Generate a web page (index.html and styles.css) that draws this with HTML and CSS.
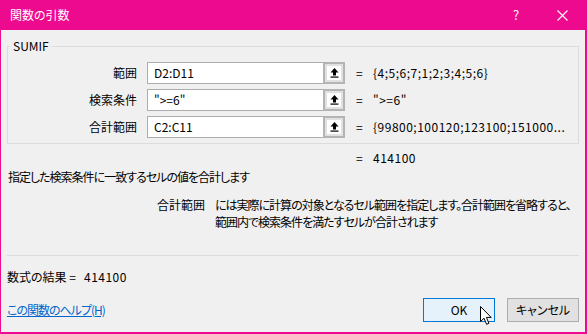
FILE: index.html
```html
<!DOCTYPE html>
<html lang="ja">
<head>
  <meta charset="utf-8">
  <title>関数の引数</title>
  <link rel="stylesheet" href="styles.css">
</head>
<body>
  <div class="window">
    <div class="titlebar">
      <span class="title">関数の引数</span>
      <span class="ctrl">?</span>
      <span class="ctrl">
        <svg width="11" height="11" viewBox="0 0 11 11"><path d="M0.5 0.5 L10.5 10.5 M10.5 0.5 L0.5 10.5" stroke="#fff" stroke-width="1.1" fill="none"/></svg>
      </span>
    </div>

    <div class="content">
      <fieldset class="group">
        <legend>SUMIF</legend>
        <div class="args">
          <label class="name">範囲</label>
          <div class="field">D2:D11</div>
          <div class="pick"><span class="pick-in"><svg width="9" height="10" viewBox="0 0 9 10"><path d="M4.5 0 L8.5 4.5 L6 4.5 L6 7.5 L3 7.5 L3 4.5 L0.5 4.5 Z" fill="#000"/><rect x="0.5" y="8.5" width="8" height="1.2" fill="#000"/></svg></span></div>
          <span class="eq">=</span>
          <span class="val">{4;5;6;7;1;2;3;4;5;6}</span>

          <label class="name">検索条件</label>
          <div class="field">"&gt;=6"</div>
          <div class="pick"><span class="pick-in"><svg width="9" height="10" viewBox="0 0 9 10"><path d="M4.5 0 L8.5 4.5 L6 4.5 L6 7.5 L3 7.5 L3 4.5 L0.5 4.5 Z" fill="#000"/><rect x="0.5" y="8.5" width="8" height="1.2" fill="#000"/></svg></span></div>
          <span class="eq">=</span>
          <span class="val">"&gt;=6"</span>

          <label class="name">合計範囲</label>
          <div class="field">C2:C11</div>
          <div class="pick"><span class="pick-in"><svg width="9" height="10" viewBox="0 0 9 10"><path d="M4.5 0 L8.5 4.5 L6 4.5 L6 7.5 L3 7.5 L3 4.5 L0.5 4.5 Z" fill="#000"/><rect x="0.5" y="8.5" width="8" height="1.2" fill="#000"/></svg></span></div>
          <span class="eq">=</span>
          <span class="val">{99800;100120;123100;151000...</span>
        </div>
      </fieldset>

      <div class="total">
        <span class="eq">=</span>
        <span class="val">414100</span>
      </div>

      <p class="summary">指定した検索条件に一致するセルの値を合計します</p>

      <div class="argdesc">
        <span class="argname">合計範囲</span>
        <span class="argtext">には実際に計算の対象となるセル範囲を指定します。合計範囲を省略すると、<br>範囲内で検索条件を満たすセルが合計されます</span>
      </div>

      <hr class="sep">

      <div class="formula">数式の結果 =&nbsp;&nbsp;&nbsp;<span class="val">414100</span></div>

      <div class="footer">
        <a href="#" class="help">この関数のヘルプ(H)</a>
        <button class="btn primary">OK</button>
        <button class="btn">キャンセル</button>
      </div>
    </div>

    <svg class="cursor" width="13" height="20" viewBox="0 0 13 20"><path d="M0.5 0.5 L0.5 15.5 L4 12.2 L6.6 18.3 L8.9 17.3 L6.4 11.4 L11.2 11.4 Z" fill="#fff" stroke="#000" stroke-width="1" stroke-linejoin="miter"/></svg>
  </div>
</body>
</html>
```

FILE: styles.css
```css
/* base */
* { box-sizing: border-box; }
body {
  margin: 0;
  background: #f0f0f0;
  font-family: "Noto Sans CJK JP", "Noto Sans", sans-serif;
  font-size: 12px;
  line-height: 16px;
  color: #000;
  font-feature-settings: "palt"; }

/* window frame */
.window {
  position: relative;
  width: 587px;
  height: 334px;
  background: #f0f0f0;
  border: solid #ee0a8f;
  border-width: 0 2px 2px 1px; }
.titlebar {
  height: 30px;
  background: #ee0a8f;
  color: #fff;
  display: flex;
  align-items: center; }
.title {
  flex: 1;
  padding-left: 9px; }
.ctrl {
  width: 46px;
  height: 30px;
  display: flex;
  align-items: center;
  justify-content: center;
  font-size: 13px; }

/* dialog body */
.content {
  padding: 0 6px; }
.group {
  margin: 8px 0 0;
  padding: 0 0 5px;
  border: 1px solid #dcdcdc; }
.group legend {
  margin-left: 2px;
  padding: 0 3px; }
.args {
  display: grid;
  grid-template-columns: 139px 176px 22px 28px 1fr;
  grid-auto-rows: 22px;
  row-gap: 5px;
  margin-top: 8px;
  align-items: center; }
.name {
  text-align: right;
  padding-right: 10px; }
.field {
  height: 22px;
  border: 1px solid #adadad;
  border-right: none;
  background: #fff;
  padding: 2px 6px; }
.pick {
  height: 22px;
  border: 2px solid #b4b4b4;
  background: #e1e1e1;
  display: flex;
  align-items: center;
  justify-content: center; }
.pick-in {
  width: 14px;
  height: 14px;
  background: #fff;
  display: flex;
  align-items: center;
  justify-content: center; }
.eq {
  padding-left: 11px; }
.val {
  white-space: nowrap;
  letter-spacing: 0.5px; }

.total {
  display: grid;
  grid-template-columns: 338px 28px 1fr;
  margin-top: 6px; }
.total .eq {
  grid-column: 2; }

/* the ui font sets kana narrow, so tighten the long japanese lines */
.summary, .argtext, .help {
  letter-spacing: -1px; }

.summary {
  margin: 3px 0 0;
  padding-left: 1px; }

.argdesc {
  display: grid;
  grid-template-columns: 208px 1fr;
  margin-top: 11px;
  line-height: 17px; }
.argname {
  text-align: right;
  padding-right: 10px; }
.argtext {
  white-space: nowrap; }

.sep {
  margin: 25px 0 0;
  border: none;
  border-top: 1px solid #dcdcdc; }

.formula {
  margin-top: 13px; }

.footer {
  display: flex;
  align-items: center;
  gap: 12px;
  margin-top: 13px; }
.help {
  flex: 1;
  color: #0066cc; }
.btn {
  width: 72px;
  height: 24px;
  font: inherit;
  color: #000;
  background: #e1e1e1;
  border: 1px solid #adadad;
  padding: 0; }
.btn.primary {
  background: #e5f1fb;
  border-color: #0078d7; }

/* mouse pointer resting over OK */
.cursor {
  position: absolute;
  left: 479px;
  top: 306px; }
```
